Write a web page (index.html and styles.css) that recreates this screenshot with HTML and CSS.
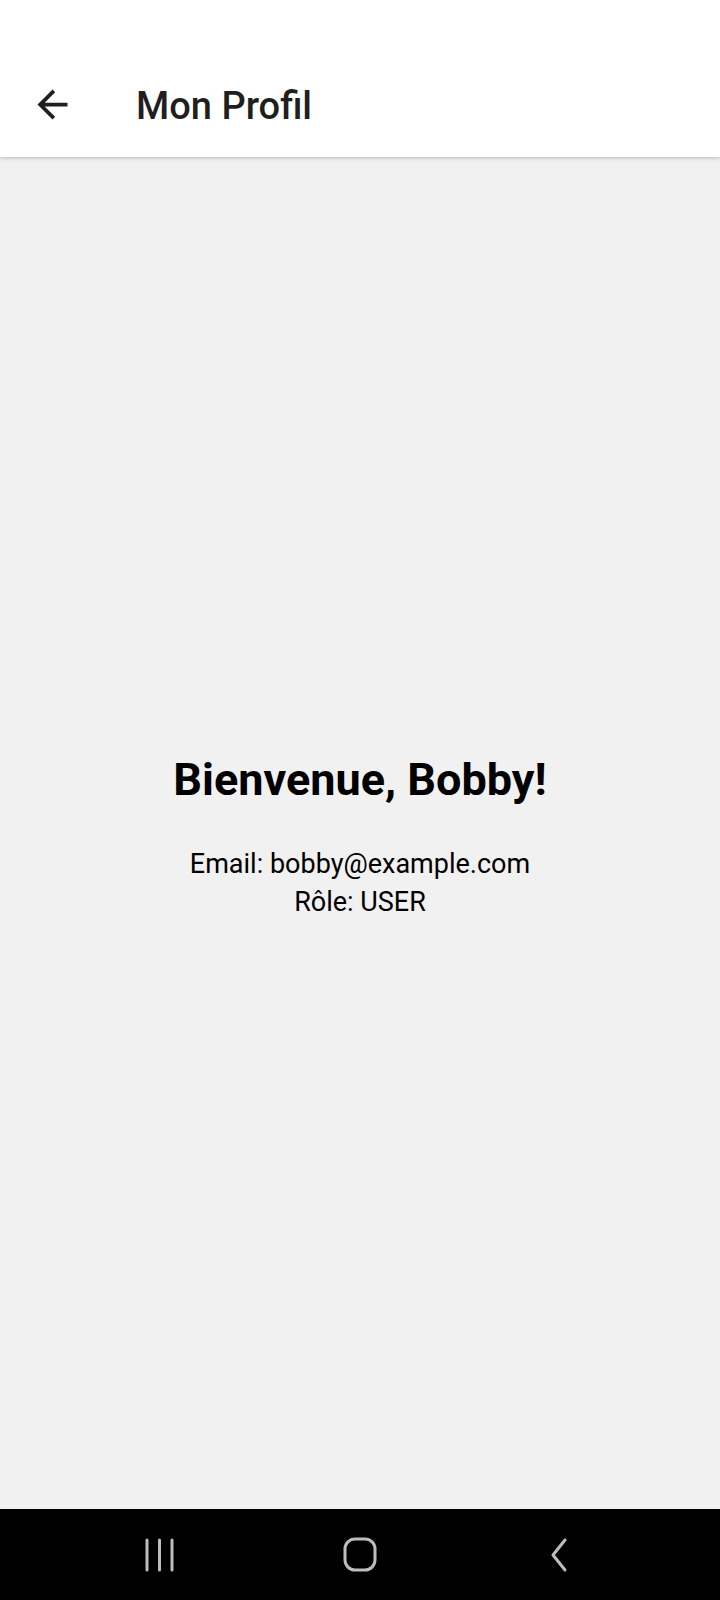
FILE: index.html
```html
<!DOCTYPE html>
<html lang="fr">
<head>
<meta charset="utf-8">
<title>Mon Profil</title>
<link rel="stylesheet" href="styles.css">
</head>
<body>
<div class="screen">
  <header class="appbar">
    <div class="toolbar">
      <button class="back-btn" aria-label="Retour">
        <svg class="back-icon" viewBox="0 0 24 24" width="45" height="45"><path d="M20 11H7.83l5.59-5.59L12 4l-8 8 8 8 1.41-1.41L7.83 13H20v-2z" fill="#1f1f1f"/></svg>
      </button>
      <h1 class="title">Mon Profil</h1>
    </div>
  </header>
  <main class="content">
    <h2 class="welcome">Bienvenue, Bobby!</h2>
    <p class="info">Email: bobby@example.com<br>Rôle: USER</p>
  </main>
  <nav class="navbar">
    <div class="nav-item">
      <svg width="32" height="34" viewBox="0 0 32 34"><g stroke="#bdbdbd" stroke-width="3" stroke-linecap="round"><line x1="3" y1="2" x2="3" y2="32"/><line x1="15.5" y1="2" x2="15.5" y2="32"/><line x1="28" y1="2" x2="28" y2="32"/></g></svg>
    </div>
    <div class="nav-item">
      <svg width="34" height="36" viewBox="0 0 34 36"><rect x="2" y="2" width="30" height="31" rx="10" fill="none" stroke="#bdbdbd" stroke-width="3"/></svg>
    </div>
    <div class="nav-item">
      <svg width="20" height="36" viewBox="0 0 20 36"><polyline points="15,3 3,18 15,33" fill="none" stroke="#bdbdbd" stroke-width="3" stroke-linecap="round" stroke-linejoin="round"/></svg>
    </div>
  </nav>
</div>
</body>
</html>
```
FILE: styles.css
```css
html, body {
  margin: 0;
  padding: 0;
}
body {
  font-family: Roboto, "Noto Sans", "Liberation Sans", sans-serif;
  background: #f1f1f1;
}
.screen {
  width: 720px;
  height: 1600px;
  display: flex;
  flex-direction: column;
  overflow: hidden;
}
.appbar {
  height: 157px;
  background: #ffffff;
  box-shadow: 0 1px 3px rgba(0,0,0,0.18), 0 2px 6px rgba(0,0,0,0.06);
  position: relative;
  z-index: 1;
  display: flex;
  flex-direction: column;
  justify-content: flex-end;
  flex-shrink: 0;
}
.toolbar {
  height: 112px;
  display: flex;
  align-items: center;
  padding-left: 30px;
  padding-top: 7px;
  box-sizing: border-box;
}
.back-btn {
  background: none;
  border: 0;
  padding: 0;
  width: 45px;
  height: 45px;
  display: flex;
}
.title {
  margin: 2px 0 0 61px;
  font-size: 38px;
  font-weight: 500;
  color: #1f1f1f;
}
.content {
  flex: 1;
  display: flex;
  flex-direction: column;
  align-items: center;
  justify-content: center;
  text-align: center;
  color: #000;
  padding-top: 8px;
}
.welcome {
  margin: 0;
  font-size: 45px;
  font-weight: 700;
  line-height: 53px;
}
.info {
  margin: 39px 0 0;
  font-size: 27px;
  line-height: 38px;
}
.navbar {
  height: 91px;
  background: #000;
  display: flex;
  justify-content: center;
  align-items: center;
  gap: 100px;
  flex-shrink: 0;
}
.nav-item {
  width: 100px;
  display: flex;
  justify-content: center;
  align-items: center;
}
```
